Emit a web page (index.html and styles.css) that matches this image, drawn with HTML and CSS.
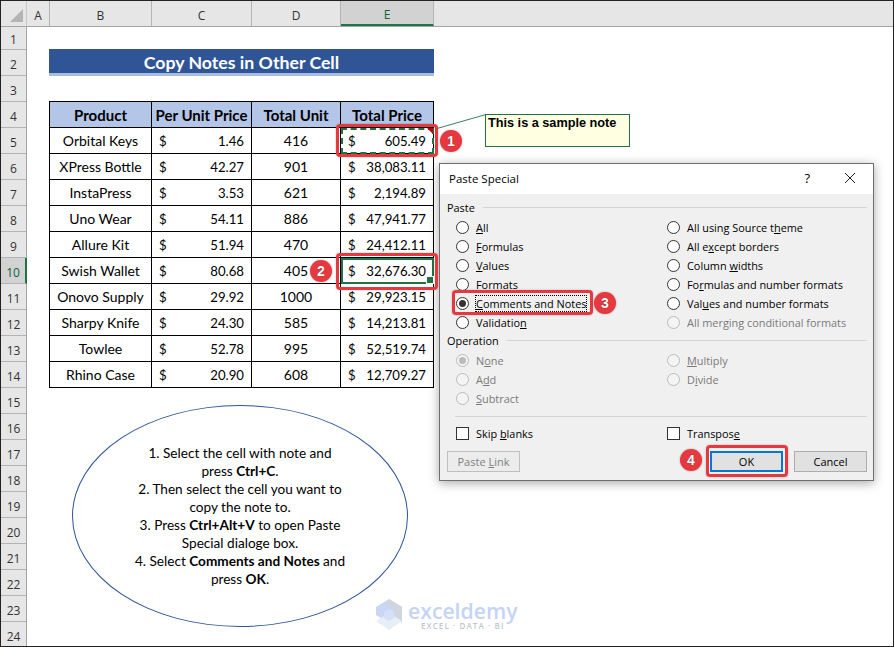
FILE: index.html
```html
<!DOCTYPE html>
<html lang="en">
<head>
<meta charset="utf-8">
<title>Copy Notes in Other Cell</title>
<link rel="stylesheet" href="styles.css">
</head>
<body>
<div class="sheet">
  <div class="col-heads">
    <div class="corner"><svg width="14" height="14" viewBox="0 0 14 14"><path d="M14 1V14H1Z" fill="#b4b4b4"/></svg></div>
    <div class="ch cw-a">A</div><div class="ch cw-b">B</div><div class="ch cw-c">C</div><div class="ch cw-d">D</div><div class="ch cw-e ch-sel">E</div><div class="ch cw-rest"></div>
  </div>
  <div class="sheet-body">
    <div class="row-heads">
      <div class="rh rh-first">1</div><div class="rh">2</div><div class="rh">3</div><div class="rh">4</div><div class="rh">5</div><div class="rh">6</div><div class="rh">7</div><div class="rh">8</div><div class="rh">9</div><div class="rh rh-sel">10</div><div class="rh">11</div><div class="rh">12</div><div class="rh">13</div><div class="rh">14</div><div class="rh">15</div><div class="rh">16</div><div class="rh">17</div><div class="rh">18</div><div class="rh">19</div><div class="rh">20</div><div class="rh">21</div><div class="rh">22</div><div class="rh">23</div><div class="rh">24</div>
    </div>
    <div class="cells">
      <div class="title-cell">Copy Notes in Other Cell</div>
      <table class="data">
        <colgroup><col class="w-b"><col class="w-c"><col class="w-d"><col class="w-e"></colgroup>
        <thead><tr><th>Product</th><th>Per Unit Price</th><th>Total Unit</th><th>Total Price</th></tr></thead>
        <tbody>
          <tr><td>Orbital Keys</td><td><div class="money"><span>$</span><span>1.46</span></div></td><td>416</td><td class="marquee"><div class="money"><span>$</span><span>605.49</span></div></td></tr>
          <tr><td>XPress Bottle</td><td><div class="money"><span>$</span><span>42.27</span></div></td><td>901</td><td><div class="money"><span>$</span><span>38,083.11</span></div></td></tr>
          <tr><td>InstaPress</td><td><div class="money"><span>$</span><span>3.53</span></div></td><td>621</td><td><div class="money"><span>$</span><span>2,194.89</span></div></td></tr>
          <tr><td>Uno Wear</td><td><div class="money"><span>$</span><span>54.11</span></div></td><td>886</td><td><div class="money"><span>$</span><span>47,941.77</span></div></td></tr>
          <tr><td>Allure Kit</td><td><div class="money"><span>$</span><span>51.94</span></div></td><td>470</td><td><div class="money"><span>$</span><span>24,412.11</span></div></td></tr>
          <tr><td>Swish Wallet</td><td><div class="money"><span>$</span><span>80.68</span></div></td><td>405</td><td class="active"><div class="money"><span>$</span><span>32,676.30</span></div></td></tr>
          <tr><td>Onovo Supply</td><td><div class="money"><span>$</span><span>29.92</span></div></td><td>1000</td><td><div class="money"><span>$</span><span>29,923.15</span></div></td></tr>
          <tr><td>Sharpy Knife</td><td><div class="money"><span>$</span><span>24.30</span></div></td><td>585</td><td><div class="money"><span>$</span><span>14,213.81</span></div></td></tr>
          <tr><td>Towlee</td><td><div class="money"><span>$</span><span>52.78</span></div></td><td>995</td><td><div class="money"><span>$</span><span>52,519.74</span></div></td></tr>
          <tr><td>Rhino Case</td><td><div class="money"><span>$</span><span>20.90</span></div></td><td>608</td><td><div class="money"><span>$</span><span>12,709.27</span></div></td></tr>
        </tbody>
      </table>
    </div>
  </div>

  <svg class="note-line" width="50" height="16" viewBox="0 0 50 16"><path d="M0 15.5L49 1.5" stroke="#3f7f62" stroke-width="1" fill="none"/></svg>
  <div class="note">This is a sample note</div>

  <div class="ellipse">
    <p>1. Select the cell with note and</p>
    <p>press <b>Ctrl+C</b>.</p>
    <p>2. Then select the cell you want to</p>
    <p>copy the note to.</p>
    <p>3. Press <b>Ctrl+Alt+V</b> to open Paste</p>
    <p>Special dialoge box.</p>
    <p>4. Select <b>Comments and Notes</b> and</p>
    <p>press <b>OK</b>.</p>
  </div>

  <div class="watermark">
    <svg class="wm-logo" width="28" height="32" viewBox="0 0 28 32">
      <path d="M14 0L27 8V16L14 24L1 16V8Z" fill="#c9d7f5"/>
      <path d="M14 0L27 8V24L20 19V12L14 8Z" fill="#cfd6dd"/>
      <path d="M1 22L14 14L27 22L14 31Z" fill="#e6eff5"/>
      <path d="M9 13L14 10L19 13V19L14 22L9 19Z" fill="#d3e0f8"/>
    </svg>
    <div class="wm-text"><div class="wm-name">exceldemy</div><div class="wm-sub">EXCEL · DATA · BI</div></div>
  </div>

  <div class="dialog">
    <div class="dlg-title">
      <span class="dlg-name">Paste Special</span>
      <span class="dlg-help">?</span>
      <svg class="dlg-close" width="12" height="12" viewBox="0 0 12 12"><path d="M1 1L11 11M11 1L1 11" stroke="#222" stroke-width="1" fill="none"/></svg>
    </div>
    <div class="dlg-body">
      <div class="group-label"><span>Paste</span><i></i></div>
      <div class="opts">
        <label class="opt"><span class="radio"></span><span><u>A</u>ll</span></label>
        <label class="opt"><span class="radio"></span><span>All using Source t<u>h</u>eme</span></label>
        <label class="opt"><span class="radio"></span><span><u>F</u>ormulas</span></label>
        <label class="opt"><span class="radio"></span><span>All e<u>x</u>cept borders</span></label>
        <label class="opt"><span class="radio"></span><span><u>V</u>alues</span></label>
        <label class="opt"><span class="radio"></span><span>Column <u>w</u>idths</span></label>
        <label class="opt"><span class="radio"></span><span>Forma<u>t</u>s</span></label>
        <label class="opt"><span class="radio"></span><span>Fo<u>r</u>mulas and number formats</span></label>
        <label class="opt"><span class="radio on"></span><span class="focus"><u>C</u>omments and Notes</span></label>
        <label class="opt"><span class="radio"></span><span>Val<u>u</u>es and number formats</span></label>
        <label class="opt"><span class="radio"></span><span>Validatio<u>n</u></span></label>
        <label class="opt off"><span class="radio"></span><span>All mer<u>g</u>ing conditional formats</span></label>
      </div>
      <div class="group-label"><span>Operation</span><i></i></div>
      <div class="opts">
        <label class="opt off"><span class="radio on"></span><span>N<u>o</u>ne</span></label>
        <label class="opt off"><span class="radio"></span><span><u>M</u>ultiply</span></label>
        <label class="opt off"><span class="radio"></span><span>A<u>d</u>d</span></label>
        <label class="opt off"><span class="radio"></span><span>D<u>i</u>vide</span></label>
        <label class="opt off"><span class="radio"></span><span><u>S</u>ubtract</span></label>
      </div>
      <div class="divider"></div>
      <div class="opts">
        <label class="opt"><span class="check"></span><span>Skip <u>b</u>lanks</span></label>
        <label class="opt"><span class="check"></span><span>Transpos<u>e</u></span></label>
      </div>
      <div class="dlg-buttons">
        <button class="btn btn-off">Paste <u>L</u>ink</button>
        <span class="btn-space"></span>
        <button class="btn btn-ok">OK</button>
        <button class="btn">Cancel</button>
      </div>
    </div>
  </div>

  <div class="callout c-e5"></div>
  <div class="callout c-e10"></div>
  <div class="callout c-com"></div>
  <div class="callout c-ok"></div>
  <div class="badge b1">1</div>
  <div class="badge b2">2</div>
  <div class="badge b3">3</div>
  <div class="badge b4">4</div>
</div>
</body>
</html>
```

FILE: styles.css
```css
* { box-sizing: border-box; }
html, body { margin: 0; padding: 0; background: #fff; }
body { width: 894px; height: 647px; overflow: hidden; }

.sheet {
  position: relative;
  width: 894px;
  height: 647px;
  border: 1px solid #222;
  font-family: "Lato", "Liberation Sans", sans-serif;
  color: #000;
  overflow: hidden;
}

/* column headings */
.col-heads { display: flex; height: 26px; background: #e6e6e6; border-bottom: 1px solid #a6a6a6; }
.corner { width: 26px; display: flex; align-items: flex-end; justify-content: flex-end; padding: 0 3px 4px 0; border-right: 1px solid #c8c8c8; }
.ch {
  display: flex; align-items: center; justify-content: center;
  border-right: 1px solid #b4b4b4;
  font-family: "Open Sans", sans-serif; font-size: 12px; color: #333; padding-top: 4px;
}
.cw-a { width: 23px; }
.cw-b { width: 102px; }
.cw-c { width: 100px; }
.cw-d { width: 89px; }
.cw-e { width: 93px; }
.cw-rest { flex: 1; border-right: 0; }
.ch-sel { background: #d2d2d2; border-bottom: 2px solid #217346; color: #0f5f3a; }

.sheet-body { display: flex; height: 620px; }

/* row headings */
.row-heads { width: 26px; flex: none; background: #e6e6e6; border-right: 1px solid #a6a6a6; }
.rh {
  height: 26px; display: flex; align-items: center; justify-content: center;
  font-family: "Open Sans", sans-serif; font-size: 12px; color: #333; padding-top: 4px;
  border-bottom: 1px solid #b4b4b4;
}
.rh-first { height: 23px; padding-top: 3px; }
.rh-sel { background: #d2d2d2; border-right: 2px solid #217346; margin-right: -1px; color: #0f5f3a; }

/* cells */
.cells { flex: 1; padding: 22px 0 0 22px; }
.title-cell {
  width: 385px; height: 27px;
  background: #2f5597; border-bottom: 3px solid #a9bde3;
  color: #fff; font-weight: 700; font-size: 17.7px; line-height: 28px;
  text-align: center;
}
.data {
  margin-top: 25px;
  border-collapse: collapse; table-layout: fixed; width: 385px;
  font-size: 14px;
}
.w-b { width: 102px; }
.w-c { width: 100px; }
.w-d { width: 89px; }
.w-e { width: 93px; }
.data th, .data td { border: 1px solid #000; height: 26px; padding: 0; text-align: center; line-height: 24px; }
.data th { background: #b4c6e7; font-weight: 700; font-size: 15px; white-space: nowrap; }
.data td { padding-top: 1px; }
.money { display: flex; justify-content: space-between; padding: 0 7px 0 7px; font-size: 13.2px; }
.marquee { background: #fff; outline: 2px dashed #217346; outline-offset: -2px; position: relative; }
.marquee::after { content: ""; position: absolute; top: 0; right: 0; border-top: 6px solid #c00000; border-left: 6px solid transparent; }
.active { outline: 2px solid #217346; outline-offset: -2px; position: relative; }
.active::after { content: ""; position: absolute; right: -1px; bottom: -1px; width: 6px; height: 6px; background: #217346; border: 1px solid #fff; }

/* note */
.note-line { position: absolute; left: 436px; top: 112px; }
.note {
  position: absolute; left: 484px; top: 113px; width: 145px; height: 33px;
  background: #ffffe1; border: 1px solid #217346;
  font-family: "Liberation Sans", sans-serif; font-weight: 700; font-size: 12.7px; line-height: 17px;
  padding: 0 2px;
}

/* ellipse */
.ellipse {
  position: absolute; left: 71px; top: 404px; width: 336px; height: 222px;
  border: 1.2px solid #2f5597; border-radius: 50%; background: #fff;
  display: flex; flex-direction: column; justify-content: center; align-items: center;
  font-size: 13.6px; line-height: 18px;
}
.ellipse p { margin: 0; white-space: nowrap; }

/* watermark */
.watermark { position: absolute; left: 374px; top: 598px; display: flex; align-items: flex-start; gap: 5px; }
.wm-text { margin-top: 2px; }
.wm-name { font-family: "Open Sans", sans-serif; font-weight: 600; font-size: 21.2px; line-height: 20px; color: #c5d4f5; }
.wm-sub { font-family: "Open Sans", sans-serif; font-weight: 600; font-size: 8px; line-height: 9px; letter-spacing: 1.1px; color: #c2c8d0; text-align: center; }

/* dialog */
.dialog {
  position: absolute; left: 438px; top: 162px; width: 435px; height: 318px;
  background: #f0f0f0; border: 1px solid #6e6e6e;
  box-shadow: 0 2px 10px rgba(0,0,0,.35);
  font-family: "Open Sans", "Liberation Sans", sans-serif; font-size: 10.9px; color: #000;
}
.dlg-title { height: 30px; background: #fff; display: flex; align-items: center; padding: 0 17px 2px 9px; }
.dlg-name { font-size: 11.5px; flex: 1; }
.dlg-help { font-size: 13px; margin-right: 34px; }
.dlg-body { padding: 5px 6px 0 7px; }
.group-label { display: flex; align-items: center; gap: 8px; height: 16px; }
.group-label i { flex: 1; height: 1px; background: #d4d4d4; }
.opts { display: grid; grid-template-columns: 211px 1fr; grid-auto-rows: 19px; padding: 3px 0 0 9px; }
.opt { display: flex; align-items: center; gap: 7px; white-space: nowrap; }
.radio { width: 13px; height: 13px; border: 1px solid #333; border-radius: 50%; background: #fff; flex: none; display: flex; align-items: center; justify-content: center; }
.radio.on::after { content: ""; width: 7px; height: 7px; border-radius: 50%; background: #333; }
.check { width: 13px; height: 13px; border: 1px solid #333; background: #fff; flex: none; }
.focus { outline: 1px dotted #000; outline-offset: 0; }
.off { color: #7a7a7a; }
.off .radio { border-color: #bbb; background: #f4f4f4; }
.off .radio.on::after { background: #bbb; }
.divider { height: 1px; background: #d4d4d4; margin: 8px 0 4px 8px; }
.dlg-buttons { display: flex; margin-top: 8px; }
.btn-space { flex: 1; }
.btn {
  width: 73px; height: 21px; padding: 0;
  background: #e1e1e1; border: 1px solid #adadad;
  font-family: inherit; font-size: 11px; color: #000;
  margin-left: 11px;
}
.btn:first-child { margin-left: 0; }
.btn-off { color: #808080; background: #ececec; border-color: #bfbfbf; }
.btn-ok { border: 2px solid #0078d7; }

/* red callouts */
.callout { position: absolute; border: 3px solid #e8383f; border-radius: 4px; box-shadow: 0 0 2px rgba(0,0,0,.3); }
.c-e5 { left: 335px; top: 123px; width: 102px; height: 33px; }
.c-e10 { left: 335px; top: 252px; width: 102px; height: 37px; }
.c-com { left: 451px; top: 289px; width: 141px; height: 25px; }
.c-ok { left: 705px; top: 444px; width: 82px; height: 32px; }
.badge {
  position: absolute; width: 22px; height: 22px; border-radius: 50%;
  background: #e8383f; color: #fff; box-shadow: 0 0 2px rgba(0,0,0,.35);
  font-family: "Liberation Sans", sans-serif; font-weight: 700; font-size: 14px; line-height: 22px; text-align: center;
  text-shadow: 0 0 1px #333;
}
.b1 { left: 439px; top: 129px; }
.b2 { left: 309px; top: 259px; }
.b3 { left: 593px; top: 291px; }
.b4 { left: 679px; top: 448px; }
```
